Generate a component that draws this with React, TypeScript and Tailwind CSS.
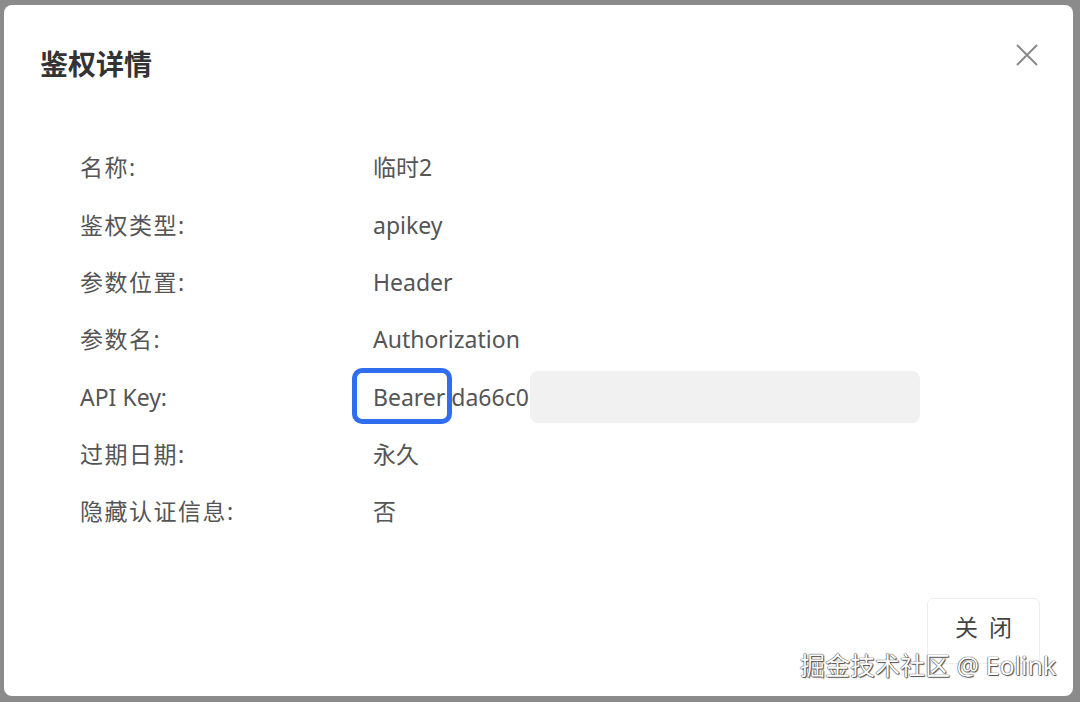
import React from "react";

const rows: [string, React.ReactNode][] = [
  ["名称:", "临时2"],
  ["鉴权类型:", "apikey"],
  ["参数位置:", "Header"],
  ["参数名:", "Authorization"],
  ["API Key:", null],
  ["过期日期:", "永久"],
  ["隐藏认证信息:", "否"],
];

export default function App() {
  return (
    <div
      className="w-[1080px] h-[702px] bg-[#8b8b8b] pt-[5px] pl-[4px] overflow-hidden relative"
      style={{ fontFamily: '"Noto Sans", "Noto Sans CJK SC", sans-serif' }}
    >
      <div className="w-[1069px] h-[691px] bg-white rounded-[8px] relative flex flex-col">
        <div className="flex items-start justify-between pl-[36px] pr-[34px] pt-[40px]">
          <h1 className="text-[28px] leading-[38px] font-bold text-[#333]">鉴权详情</h1>
          <svg width="24" height="24" viewBox="0 0 24 24" className="mt-[-2px]" fill="none" stroke="#8a8a8a" strokeWidth="2">
            <path d="M2 2 L22 22 M22 2 L2 22" />
          </svg>
        </div>
        <div className="pl-[76px] mt-[56px] flex flex-col text-[23px] text-[#555]">
          {rows.map(([label, value]) => (
            <div key={label} className="flex items-center h-[57.3px]">
              <div className={value === null ? "w-[293px]" : "w-[293px] tracking-[1.5px]"}>{label}</div>
              {value !== null ? (
                <div>{value}</div>
              ) : (
                <div className="flex items-center">
                  <span className="relative">
                    Bearer da66c0
                    <span className="absolute left-[-21px] top-[-12px] w-[100px] h-[56px] border-[5px] border-[#2f6ef0] rounded-[10px]" />
                  </span>
                  <div className="ml-[1px] w-[390px] h-[52px] bg-[#f1f1f1] rounded-[8px]" />
                </div>
              )}
            </div>
          ))}
        </div>
        <div className="flex-1" />
        <div className="flex justify-end pr-[33px] pb-[32px]">
          <button className="w-[113px] h-[66px] border border-[#eeeeee] rounded-[6px] text-[23px] text-[#444] bg-white flex items-center justify-center gap-[11px] pb-[8px]">
            <span>关</span>
            <span>闭</span>
          </button>
        </div>
      </div>
      <div
        className="absolute left-[800px] top-[647px] text-[25px] text-white whitespace-nowrap"
        style={{ textShadow: "0 0 1px #333, 0 0 1px #333, 1px 1px 1px #555" }}
      >
        掘金技术社区 @ Eolink
      </div>
    </div>
  );
}
